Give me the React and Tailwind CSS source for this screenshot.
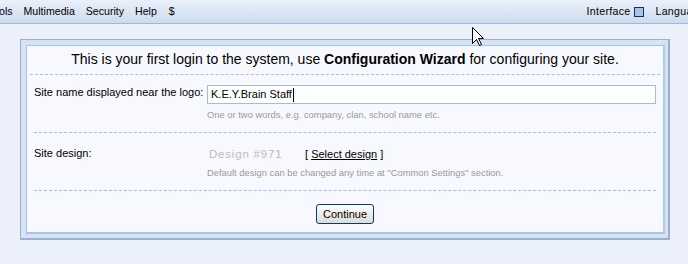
import React from "react";

export default function App() {
  const font = { fontFamily: '"Liberation Sans", Arial, sans-serif' };
  return (
    <div className="relative w-[688px] h-[264px] overflow-hidden bg-[#ebf0fa] text-black" style={font}>
      {/* top menu bar */}
      <div className="h-[24px] border-b border-[#9fb7dd] bg-gradient-to-b from-[#eaf0f9] to-[#cddbee] flex items-center justify-between text-[10.6px] leading-none">
        <div className="flex items-center gap-[11px] -ml-[1px]">
          <span>ols</span>
          <span>Multimedia</span>
          <span>Security</span>
          <span>Help</span>
          <span className="ml-[1px]">$</span>
        </div>
        <div className="flex items-center -mr-[17px]">
          <span className="tracking-[0.3px]">Interface</span>
          <span className="ml-[4px] w-[10px] h-[10px] border border-[#1f2f4f] bg-[#a6c4ea]" />
          <span className="ml-[11px] tracking-[0.3px]">Language</span>
        </div>
      </div>

      {/* outer panel */}
      <div className="mt-[15px] ml-[20px] w-[650px] h-[201px] border border-[#9fb0c9] border-r-2 border-b-2 bg-[#d6e3f5] pl-[5px] pt-[5px] pr-[3px] pb-[4px]">
        <div className="h-full border border-[#a7c3ea] border-r-2 border-b-2 border-r-[#b0cbee] bg-[#f7f9fe] flex flex-col">
          {/* title */}
          <div className="h-[28px] flex items-center justify-center text-[14px] leading-none pb-[2px]">
            <span>
              This is your first login to the system, use <b>Configuration Wizard</b> for configuring your site.
            </span>
          </div>
          <div className="mx-[3px] border-t border-dashed border-[#a5bdec]" />

          {/* row 1 */}
          <div className="h-[57px] px-[7px] flex">
            <div className="w-[173px] pt-[12px] text-[11px] leading-none whitespace-nowrap">Site name displayed near the logo:</div>
            <div className="flex-1 pt-[10px]">
              <div className="h-[19px] w-[449px] border border-[#9dbde8] bg-white flex items-center pl-[3px] text-[11px] leading-none">
                <span>K.E.Y.Brain Staff</span>
                <span className="ml-[1px] w-[1px] h-[14px] bg-black" />
              </div>
              <div className="mt-[6px] text-[9.4px] leading-none text-[#9a9a9a] whitespace-nowrap">
                One or two words, e.g. company, clan, school name etc.
              </div>
            </div>
          </div>
          <div className="mx-[7px] border-t border-dashed border-[#a5bdec]" />

          {/* row 2 */}
          <div className="h-[57px] px-[7px] flex">
            <div className="w-[173px] pt-[15px] text-[11px] leading-none">Site design:</div>
            <div className="flex-1 pt-[16px]">
              <div className="flex items-center leading-none">
                <span className="ml-[2px] w-[96px] text-[11.5px] tracking-[0.8px] text-[#bcbcbc]">Design #971</span>
                <span className="text-[11px]">
                  [ <span className="underline">Select design</span> ]
                </span>
              </div>
              <div className="mt-[7px] text-[9.4px] leading-none text-[#9a9a9a] whitespace-nowrap">
                Default design can be changed any time at "Common Settings" section.
              </div>
            </div>
          </div>
          <div className="mx-[7px] border-t border-dashed border-[#a5bdec]" />

          {/* button */}
          <div className="flex-1 flex justify-center pt-[13px]">
            <button className="h-[20px] px-[6px] border border-[#003c74] rounded-[3px] bg-gradient-to-b from-white to-[#dcdcd3] text-[11px] leading-none text-black">
              Continue
            </button>
          </div>
        </div>
      </div>

      {/* mouse cursor */}
      <svg className="absolute left-[472px] top-[27px]" width="13" height="20" viewBox="0 0 13 20">
        <path d="M0.5 0.5 L0.5 16.5 L4.5 12.5 L7.5 18.5 L9.5 17.5 L6.5 11.5 L11.5 11.5 Z" fill="white" stroke="black" strokeWidth="1" />
      </svg>
    </div>
  );
}
